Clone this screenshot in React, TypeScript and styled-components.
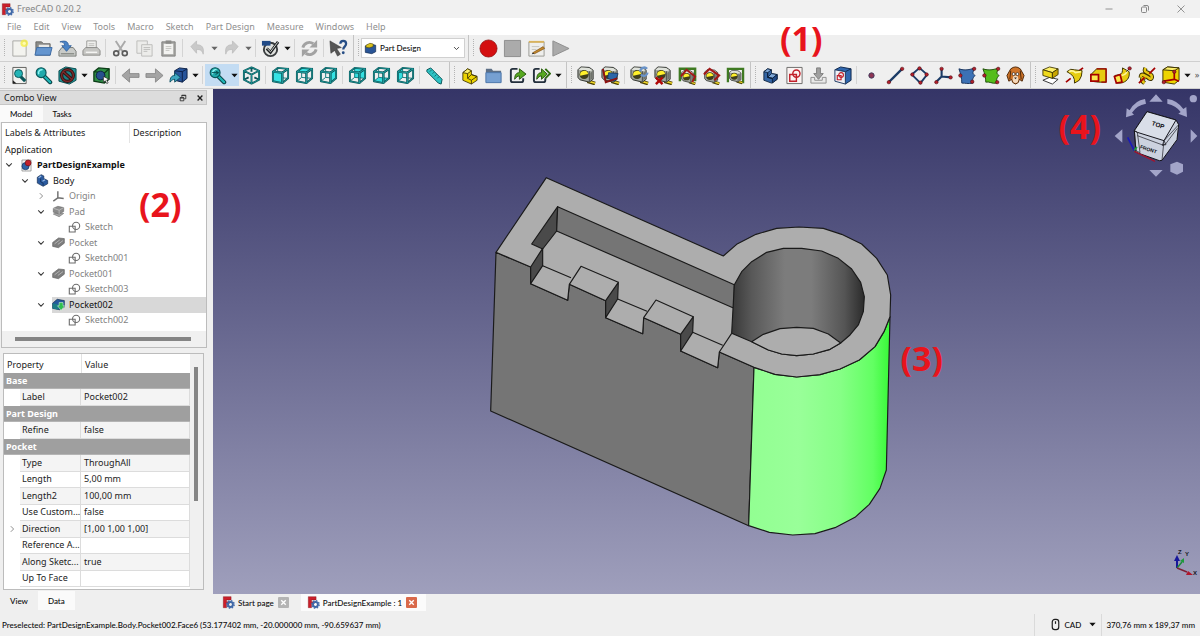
import React from "react";
import styled, { createGlobalStyle, css } from "styled-components";

const GlobalStyle = createGlobalStyle`
  *, *::before, *::after { box-sizing: border-box; }
  body {
    margin: 0;
    background: #efefef;
    color: #1c1c1c;
    font: 9px/12px "Noto Sans", "Open Sans", sans-serif;
  }
  button, select { font: inherit; color: inherit; border: 0; padding: 0; margin: 0; background: none; }
  ul { list-style: none; margin: 0; padding: 0; }
`;

const smallText = css`
  color: #0c0c0c;
  font-family: Lato, "Noto Sans", sans-serif;
  font-size: 8px;
  font-weight: 500;
`;

/* ---------- icons ---------- */

type Face = "front" | "top" | "right" | "back" | "bottom" | "left";

const FACES: Record<Face, string> = {
  front: "2,6 12,7 12,18 2,16",
  top: "2,6 7,2 18,3 12,7",
  right: "12,7 18,3 18,13 12,18",
  back: "7,2 18,3 18,13 7,12",
  bottom: "2,16 7,12 18,13 12,18",
  left: "2,6 7,2 7,12 2,16",
};

const CubeView = ({ face }: { face: Face }) => {
  const hidden = face === "back" || face === "bottom" || face === "left";
  return (
    <g strokeLinejoin="round" fill="none">
      {hidden && <polygon points={FACES[face]} fill="#35dfe0" />}
      <path d="M7 2V12M7 12L2 16M7 12L18 13" stroke="#127b7d" strokeWidth="1" />
      {!hidden && <polygon points={FACES[face]} fill="#35e3e4" />}
      <g stroke="#0a5558" strokeWidth="2">
        <polygon points={FACES.front} />
        <polygon points={FACES.top} />
        <polygon points={FACES.right} />
      </g>
      <g stroke="#26a5a6" strokeWidth=".7">
        <polygon points={FACES.front} />
        <polygon points={FACES.top} />
        <polygon points={FACES.right} />
      </g>
    </g>
  );
};

const Lens = () => (
  <g>
    <path d="M11 11l6 6" stroke="#083f42" strokeWidth="4.4" strokeLinecap="round" />
    <path d="M11 11l6 6" stroke="#1fb4b6" strokeWidth="2.4" strokeLinecap="round" />
    <circle cx="7.5" cy="7" r="5.2" fill="#20a9ab" stroke="#0a5558" strokeWidth="1.2" />
    <path d="M5 8.6A3.4 3.4 0 0 1 9 4" stroke="#8ff3f3" strokeWidth="1.6" fill="none" />
  </g>
);

const Tape = () => (
  <g strokeLinejoin="round">
    <path d="M11 16l8 2.500" stroke="#4b3f00" strokeWidth="3.800" />
    <path d="M11 15.600l8 2.500" stroke="#edd42a" strokeWidth="1.800" />
    <path d="M1 4l3-3 9 .5 4 3V14l-4 3-10-2.500-2-2.500z" fill="#a3a79f" stroke="#2c2f2b" strokeWidth="1" />
    <path d="M1.500 4l3-2.500 8 .5 4 2.500-3.500 1z" fill="#dfe2db" />
    <path d="M13 5.500v11" stroke="#2c2f2b" strokeWidth=".8" />
    <path d="M14 7v8l2-1.500V6z" fill="#6f736c" />
    <circle cx="7.500" cy="9" r="4.800" fill="#3f3e1c" />
    <path d="M3.400 10.200a4.200 4.200 0 0 1 8.300-1.700z" fill="#fff02c" />
  </g>
);

const BlueBody = () => (
  <g stroke="#0b1e3a" strokeWidth=".9" strokeLinejoin="round">
    <path d="M3 6l4-3 4 1v4l6 1v5l-6 4-8-3z" fill="#3465a4" />
    <path d="M3 6l4-3 4 1-4 3z" fill="#7fa8d8" />
    <path d="M7 12l4-4 6 1-5 4z" fill="#7fa8d8" />
    <path d="M7 7v5l5 1v5l5-4V9l-5 4-5-1z" fill="#204a87" />
  </g>
);

const Dot = ({ x, y }: { x: number; y: number }) => (
  <circle cx={x} cy={y} r="1.800" fill="#b3202c" stroke="#4d0a10" strokeWidth=".6" />
);

const FreecadLogo = () => (
  <g>
    <path d="M2 1h12v5H7v3h4v3H7v6H2z" fill="#cb1f2a" stroke="#7d0f16" strokeWidth=".6" />
    <circle cx="13" cy="13" r="3.800" fill="none" stroke="#3f68a8" strokeWidth="3" />
    <circle cx="13" cy="13" r="5.800" fill="none" stroke="#3f68a8" strokeWidth="2" strokeDasharray="2.300 2.250" />
  </g>
);

const YellowBox = () => (
  <g stroke="#3c3200" strokeWidth=".9" strokeLinejoin="round">
    <path d="M2 4l7-3 9 2-6 4z" fill="#fdf06a" />
    <path d="M2 4l10 3v6L2 10z" fill="#f0da1c" />
    <path d="M12 7l6-4v6l-6 4z" fill="#c9a600" />
  </g>
);

const ICONS: Record<string, React.ReactNode> = {
  logo: <FreecadLogo />,
  fileNew: (
    <g>
      <path d="M3 2h14v16H3z" fill="#f3f3ef" stroke="#a9a9a5" />
      <circle cx="15" cy="4.500" r="4" fill="#f5ee3c" opacity=".75" />
      <circle cx="15" cy="4.500" r="1.700" fill="#fffcb0" />
    </g>
  ),
  open: (
    <g>
      <path d="M2 17V3h6l2 2h7v12z" fill="#8b8b88" stroke="#6a6a68" />
      <path d="M5 6h11v6H5z" fill="#e8e8e6" />
      <path d="M1 17l2-8h16l-2 8z" fill="#6495cf" stroke="#3d6ba5" />
    </g>
  ),
  save: (
    <g>
      <path d="M1 13l3-4h12l3 4v5H1z" fill="#c9cbc8" stroke="#777a76" />
      <path d="M3 15.500h14" stroke="#8d908b" strokeWidth="1.500" />
      <path d="M2 3c6-2 9 0 9 4h3l-5 6-5-6h3c0-3-2-4-5-4z" fill="#4a83c6" stroke="#2a5a97" strokeWidth=".8" />
    </g>
  ),
  print: (
    <g>
      <path d="M5 2h10v9H5z" fill="#f1f1ef" stroke="#9b9b98" />
      <path d="M7 5h6M7 7h6" stroke="#b9b9b6" />
      <path d="M1 12l3-3h12l3 3v5H1z" fill="#c6c6c3" stroke="#8a8a87" />
      <path d="M4 14h12" stroke="#f5f5f3" strokeWidth="1.500" />
    </g>
  ),
  cut: (
    <g fill="none">
      <path d="M5 2l7 11M15 2L8 13" stroke="#a9a9a9" strokeWidth="2" />
      <circle cx="5.500" cy="15" r="2.600" stroke="#5c5c5c" strokeWidth="1.800" />
      <circle cx="14.500" cy="15" r="2.600" stroke="#5c5c5c" strokeWidth="1.800" />
    </g>
  ),
  copy: (
    <g fill="#ececea" stroke="#bdbdba">
      <path d="M2 2h11v13H2z" />
      <path d="M7 6h11v12H7z" />
      <path d="M9 9h7M9 11h7M9 13h4" />
    </g>
  ),
  paste: (
    <g>
      <path d="M3 3h14v15H3z" fill="#a6a6a3" stroke="#82827f" />
      <path d="M5 5h10v11H5z" fill="#f3f3f1" />
      <path d="M7 1.500h6V5H7z" fill="#8b8b88" />
      <path d="M7 8h6M7 10h6M7 12h4" stroke="#c4c4c1" />
    </g>
  ),
  undo: <path d="M3 8l6-6v4c6 0 8 3 7 10-1-4-3-5-7-5v4z" fill="#c9c9c9" stroke="#b8b8b8" strokeWidth=".7" />,
  redo: <path d="M17 8l-6-6v4c-6 0-8 3-7 10 1-4 3-5 7-5v4z" fill="#c9c9c9" stroke="#b8b8b8" strokeWidth=".7" />,
  validate: (
    <g fill="none">
      <circle cx="10" cy="11" r="7" stroke="#3a3d3f" strokeWidth="2" fill="#dfe1de" />
      <path d="M6 10l4 4 8-11" stroke="#202325" strokeWidth="3" />
      <path d="M6.500 10l3.500 3.500L17.500 3.500" stroke="#d7dad6" strokeWidth="1" />
      <path d="M1 2h9v5H1z" fill="#204a87" />
    </g>
  ),
  refresh: (
    <g fill="none" stroke="#a2a2a2" strokeWidth="3">
      <path d="M3 9a7 7 0 0 1 11-4" />
      <path d="M17 11a7 7 0 0 1-11 4" />
      <path d="M18 1v8h-8z" fill="#a2a2a2" stroke="none" />
      <path d="M2 19v-8h8z" fill="#a2a2a2" stroke="none" />
    </g>
  ),
  whats: (
    <g>
      <path d="M1 2l12 7-5 1 4 6-3 2-3-6-4 3z" fill="#565656" stroke="#333" strokeWidth=".6" />
      <path d="M12 5c0-4 6-4 6 0 0 3-3 3-3 6" fill="none" stroke="#274e86" strokeWidth="2.400" />
      <circle cx="15" cy="14.500" r="1.500" fill="#274e86" />
    </g>
  ),
  record: <circle cx="10" cy="10" r="9" fill="#d40f10" stroke="#8f0b0b" strokeWidth=".8" />,
  stop: <path d="M1.500 1.500h17v17h-17z" fill="#ababab" stroke="#8c8c8c" />,
  macro: (
    <g>
      <path d="M2 3h16v15H2z" fill="#eeeeec" stroke="#9a9a94" />
      <path d="M2 2h16v2H2z" fill="#d9b35c" />
      <path d="M5 8h8M5 11h5" stroke="#c4c4bd" />
      <path d="M6 14.500L17 8l1.500 2L8 15.500z" fill="#c48a2b" stroke="#7b4d13" strokeWidth=".7" />
      <path d="M5 16l1-1.500 2 1z" fill="#222" />
    </g>
  ),
  play: <path d="M2 2l17 8-17 8z" fill="#aaaaaa" stroke="#8c8c8c" />,

  fitAll: (
    <g>
      <path d="M3 1.500h14v17H3z" fill="#f2f2f0" stroke="#5c5c5a" />
      <path d="M3 15l4 3.500H3z" fill="#222" />
      <path d="M11 11l5 5" stroke="#0a5558" strokeWidth="3.400" />
      <circle cx="9" cy="8" r="4.200" fill="#24b4b6" stroke="#0a5558" strokeWidth="1" />
    </g>
  ),
  fitSel: <Lens />,
  drawStyle: (
    <g>
      <path d="M1 5l7-4 11 2v12l-7 4-11-3z" fill="#1f9599" stroke="#0a4a4d" />
      <circle cx="10" cy="10" r="6.200" fill="#1d7f83" stroke="#2d1414" strokeWidth="3.400" />
      <path d="M5.500 6l9 8" stroke="#2d1414" strokeWidth="3.400" />
      <circle cx="10" cy="10" r="6.200" fill="none" stroke="#7f2a2a" strokeWidth="1.400" />
      <path d="M5.500 6l9 8" stroke="#7f2a2a" strokeWidth="1.400" />
    </g>
  ),
  selBox: (
    <g>
      <path d="M2 6l5-4 11 1v11l-5 4-11-2z" fill="#2f8f46" stroke="#0c3d17" strokeWidth="1.400" />
      <path d="M2 6l11 1.500V18M13 7.500L18 3" fill="none" stroke="#0c3d17" strokeWidth="1.400" />
      <circle cx="9" cy="10" r="4.600" fill="#27508e" stroke="#0d2147" />
      <path d="M12 11l6 3-2.500.8 1.500 3-1.500.7-1.500-3-2 1.500z" fill="#fff" stroke="#222" strokeWidth=".7" />
    </g>
  ),
  back: <path d="M1 10l8-7v5h10v4H9v5z" fill="#a4a4a4" stroke="#7f7f7f" strokeWidth=".8" />,
  forward: <path d="M19 10l-8-7v5H1v4h10v5z" fill="#a4a4a4" stroke="#7f7f7f" strokeWidth=".8" />,
  linkGo: (
    <g>
      <path d="M6 5l5-3 8 1v10l-5 4-8-2z" fill="#27549a" stroke="#0d2147" />
      <path d="M6 5l8 1v11M14 6l5-3" fill="none" stroke="#0d2147" />
      <path d="M1 17c0-5 2-7 5-7V7l6 5-6 5v-3c-2 0-3 1-5 3z" fill="#3ea6c0" stroke="#0c4a5c" strokeWidth=".9" />
    </g>
  ),
  viewSync: (
    <g>
      <Lens />
      <path d="M4 7h7M8 5l3 2-3 2" fill="none" stroke="#04494b" />
    </g>
  ),
  isometric: (
    <g fill="none" strokeLinejoin="round">
      <path d="M10 1.500L18 5v9.500L10 18.500 2 14.500V5zM2 5l8 4 8-4M10 9v9.500M10 1.500V6M2 14.500L7 12M18 14.500L13 12" stroke="#0a5558" strokeWidth="2" />
      <path d="M10 1.500L18 5v9.500L10 18.500 2 14.500V5zM2 5l8 4 8-4M10 9v9.500" stroke="#26a5a6" strokeWidth=".7" />
    </g>
  ),
  front: <CubeView face="front" />,
  top: <CubeView face="top" />,
  right: <CubeView face="right" />,
  rear: <CubeView face="back" />,
  bottom: <CubeView face="bottom" />,
  left: <CubeView face="left" />,
  ruler: (
    <g>
      <path d="M2 4l4-2 12 12-1 5-3-1L2 6z" fill="#2dc2c4" stroke="#0a5558" strokeLinejoin="round" />
      <path d="M7 4l-2 2M9.500 6.500l-1.500 1.500M12 9l-2 2M14.500 11.500L13 13" stroke="#0a5558" strokeWidth=".8" />
    </g>
  ),
  part: (
    <g stroke="#3c3200" strokeWidth=".9" strokeLinejoin="round">
      <path d="M3 7l5-4 4 2v4l6 2v4l-6 4-9-4z" fill="#edd400" />
      <path d="M3 7l5-4 4 2-4 3z" fill="#fdf06a" />
      <path d="M8 8v5l4 2v4M8 13l4-4 6 2-6 4" fill="none" />
    </g>
  ),
  group: (
    <g>
      <path d="M2 17V3h6l1.500 2H18v12z" fill="#5d6f86" />
      <path d="M2 7h16v10.500H2z" fill="#76a0d2" stroke="#4d77ab" />
    </g>
  ),
  link: (
    <g fill="none">
      <path d="M10 3H5q-2 0-2 2v10q0 2 2 2h9q2 0 2-2v-2" stroke="#232f3c" strokeWidth="2" />
      <path d="M7 14c0-5 2-7 5-7V3l7 5.500-7 5.500v-3.500c-2 0-3 1-5 3.500z" fill="#57a821" stroke="#1e4d06" strokeWidth=".9" />
    </g>
  ),
  linkMulti: (
    <g fill="none">
      <path d="M8 3H4Q2 3 2 5v10q0 2 2 2h8q2 0 2-2v-2" stroke="#232f3c" strokeWidth="2" />
      <path d="M14 3l5 5-5 5" stroke="#2f6d0f" strokeWidth="2" />
      <path d="M5 14c0-5 2-7 5-7V3l6 5.500-6 5.500v-3.500c-2 0-3 1-5 3.500z" fill="#57a821" stroke="#1e4d06" strokeWidth=".9" />
    </g>
  ),
  measLinear: <Tape />,
  measAngular: (
    <g>
      <Tape />
      <path d="M8 7l10 1-3 8-8-3z" fill="#2b66a8" stroke="#14335c" strokeWidth=".8" />
      <path d="M2 3l3 14 12-4" fill="none" stroke="#8d1212" strokeWidth="2" />
    </g>
  ),
  measRefresh: (
    <g>
      <Tape />
      <path d="M11 6a4 4 0 0 1 7-3M18.500 7a4 4 0 0 1-7 2" fill="none" stroke="#6a93c8" strokeWidth="2.400" />
    </g>
  ),
  measClear: (
    <g>
      <Tape />
      <path d="M2 12l7 7M9 12l-7 7" stroke="#b00808" strokeWidth="2.600" />
    </g>
  ),
  measToggle: (
    <g>
      <path d="M2 16V3h16v13" fill="none" stroke="#3f7a22" strokeWidth="2.600" />
      <g transform="translate(3 4) scale(.8)">
        <Tape />
      </g>
      <path d="M3 11l6-7 9 7-3 6" fill="none" stroke="#a31818" strokeWidth="2" />
    </g>
  ),
  measToggle3d: (
    <g>
      <g transform="translate(2 3) scale(.85)">
        <Tape />
      </g>
      <path d="M2 9l6-6 10 7-5 5" fill="none" stroke="#a31818" strokeWidth="2.200" />
    </g>
  ),
  measDelta: (
    <g>
      <path d="M2 17V3h16v14h-4" fill="none" stroke="#3f7a22" strokeWidth="2.400" />
      <g transform="translate(3 4) scale(.75)">
        <Tape />
      </g>
    </g>
  ),
  body: <BlueBody />,
  sketch: (
    <g>
      <path d="M2 1.500h16v17H2z" fill="#fbf3f2" stroke="#6b6b69" />
      <path d="M5 9h7v7H5z" fill="none" stroke="#c2202a" strokeWidth="1.500" />
      <circle cx="12" cy="8" r="3.800" fill="none" stroke="#c2202a" strokeWidth="1.500" />
    </g>
  ),
  mapSketch: (
    <g>
      <path d="M2 12h4v3h8v-3h4v6H2z" fill="#e9e9e9" stroke="#8d8d8d" />
      <path d="M8 2h4v6h3l-5 6-5-6h3z" fill="#a0a0a0" stroke="#7c7c7c" />
    </g>
  ),
  sketchView: (
    <g>
      <path d="M2 4l6-3 11 2v12l-6 4V6z" fill="#2f66ae" stroke="#10284c" />
      <path d="M13 6l6-3" stroke="#10284c" />
      <path d="M2 4l11 2v13L2 16z" fill="#eef1f6" stroke="#203a63" />
      <circle cx="8.500" cy="9.500" r="2.500" fill="none" stroke="#c2202a" strokeWidth="1.200" />
      <path d="M4.500 10h4v4.500h-4z" fill="none" stroke="#c2202a" strokeWidth="1.200" />
    </g>
  ),
  point: <circle cx="10" cy="10" r="2.800" fill="#8d3453" stroke="#3f3a5c" />,
  line: (
    <g>
      <path d="M3 17L17 3" stroke="#1b3b66" strokeWidth="2.400" />
      <Dot x={3} y={17} />
      <Dot x={17} y={3} />
    </g>
  ),
  plane: (
    <g>
      <path d="M2 9l8-7 8 7-7 9z" fill="none" stroke="#1b3b66" strokeWidth="2" />
      <Dot x={2.5} y={9} />
      <Dot x={10} y={2.5} />
      <Dot x={17.5} y={9} />
      <Dot x={11} y={17.5} />
    </g>
  ),
  axes: (
    <g>
      <path d="M8 11V3M8 11l-6 6M8 11l10 1" stroke="#1b3b66" strokeWidth="2.200" />
      <Dot x={8} y={3} />
      <Dot x={2.5} y={17} />
      <Dot x={17.5} y={12} />
    </g>
  ),
  shapeBinder: (
    <g>
      <path d="M1 3c6 2 11 1 17-1-3 5-3 6 0 8-3 3-3 5-2 8-6 1-8 0-12 0 0-5-1-9-3-15z" fill="#3c71b5" stroke="#17335d" />
      <Dot x={17} y={3} />
      <Dot x={2.5} y={10} />
      <Dot x={15} y={16.5} />
    </g>
  ),
  subShape: (
    <g>
      <path d="M1 3c6 2 11 1 17-1-3 5-3 6 0 8-3 3-3 5-2 8-6 1-8-2-12-1 0-4-1-9-3-14z" fill="#55bd1c" stroke="#1d4d08" />
      <Dot x={17} y={3} />
      <Dot x={2.5} y={10} />
      <Dot x={16} y={17} />
    </g>
  ),
  clone: (
    <g>
      <path d="M5 3q5-4 10 0l4 7-2 6-3-2q0 4-4 5-4-1-4-5l-3 2-2-6z" fill="#cf7428" stroke="#4a2405" />
      <ellipse cx="10" cy="14" rx="3" ry="4" fill="#f3d9bd" />
      <path d="M5 5l-1 9M15 5l1 9" stroke="#4a2405" />
      <circle cx="8" cy="8.500" r="1.500" fill="#fff" stroke="#222" strokeWidth=".7" />
      <circle cx="12" cy="8.500" r="1.500" fill="#fff" stroke="#222" strokeWidth=".7" />
      <path d="M8.500 12h3l-1.500 2z" fill="#222" />
    </g>
  ),
  pad: (
    <g>
      <path d="M2 15l7-3 9 2-6 5z" fill="#fff" stroke="#333" />
      <YellowBox />
    </g>
  ),
  revolution: (
    <g>
      <path d="M1 17l5-4M15 5l4-3" stroke="#a40000" strokeWidth="1.800" />
      <path d="M2 6q4-4 8-2l8 1q0 6-3 10l-5 3q1-8-8-12z" fill="#e6cc10" stroke="#3c3200" />
      <path d="M4 6q4-2 7 1l6-1" fill="none" stroke="#fff59a" strokeWidth="1.800" />
    </g>
  ),
  loft: (
    <g>
      <path d="M2 9l6-6h10v14l-8 0-8-1z" fill="#e6cc10" stroke="#3c3200" />
      <path d="M2 9h8v7H2z" fill="#fbe94f" stroke="#a40000" strokeWidth="1.800" />
      <path d="M8 3h10v14h-5" fill="none" stroke="#a40000" strokeWidth="1.400" />
    </g>
  ),
  sweep: (
    <g>
      <path d="M2 10l5-1c3-1 3-3 3-7l7 4c1 7-3 11-9 12H4z" fill="#e6cc10" stroke="#3c3200" />
      <path d="M9 10q5-1 6-5" fill="none" stroke="#fff59a" strokeWidth="1.500" />
      <path d="M1.500 11l6-2 2 8-6 1z" fill="#fbe94f" stroke="#a40000" strokeWidth="1.800" />
      <path d="M14 6l4-4" stroke="#222" />
      <Dot x={17.5} y={2.5} />
    </g>
  ),
  helix: (
    <g>
      <path d="M4 12c0-6 6-1 9 1s4-3 0-5-6-2-4-6M8 18c-4-3-3-6 1-6" fill="none" stroke="#3c3200" strokeWidth="4.600" />
      <path d="M4 12c0-6 6-1 9 1s4-3 0-5-6-2-4-6M8 18c-4-3-3-6 1-6" fill="none" stroke="#e5c712" strokeWidth="2.600" />
      <path d="M2 18l6-6M13 8l6-6" stroke="#a40000" strokeWidth="1.800" />
    </g>
  ),
  box: (
    <g strokeLinejoin="round">
      <path d="M2 4l5-3 12 1v13l-5 4-12-2z" fill="#edd400" stroke="#3c3200" />
      <path d="M2 4l12 1 5-3-12-1z" fill="#fdf06a" stroke="#3c3200" />
      <path d="M14 5v9L3 16M14 14l5 2" fill="none" stroke="#a40000" strokeWidth="1.800" />
      <Dot x={3} y={17} />
      <Dot x={14} y={6} />
    </g>
  ),

  document: (
    <g>
      <path d="M3 1.500h14v17H3z" fill="#f5f5f3" stroke="#777" />
      <circle cx="8.500" cy="11" r="5.500" fill="#2f62a6" stroke="#122c54" />
      <circle cx="12.500" cy="6" r="4.500" fill="#c4202b" stroke="#6a0d13" />
    </g>
  ),
  treeBody: (
    <g strokeLinejoin="round">
      <path d="M2 5l6-4 4 2v4l6 3v5l-7 4-9-5z" fill="#2a5a9f" stroke="#10284c" />
      <path d="M4 6l4-3M10 11l4-2" stroke="#9bbbe4" strokeWidth="1.800" />
      <path d="M7 7v5l4 2v4" fill="none" stroke="#10284c" />
    </g>
  ),
  treeOrigin: <path d="M9 2v10l-7 5M9 12l9 1" stroke="#6f6f6f" fill="none" strokeWidth="2.200" />,
  treePad: (
    <g stroke="#5f5f5f" strokeWidth=".8">
      <path d="M2 14l7-3 9 2-7 5z" fill="#a8a8a8" />
      <path d="M2 5l7-3 9 2v6l-7 4-9-3z" fill="#8b8b8b" />
      <path d="M2 5l9 3 7-4M11 8v6" fill="none" stroke="#dedede" />
    </g>
  ),
  treePocket: (
    <g>
      <path d="M1 10l9-7 9 1v7l-9 7-9-2z" fill="#7d7d7d" stroke="#666" />
      <path d="M4 12l8-6M9 13l8-6" stroke="#c2c2c2" strokeWidth="1.200" />
    </g>
  ),
  treePocketTip: (
    <g>
      <path d="M1 8l7-6 11 2v10l-7 4-11-2z" fill="#265a9d" stroke="#10284c" />
      <path d="M1 8l9 2v8l-9-2z" fill="#1d7d86" />
      <path d="M11 7h6v5h2.500l-5.500 7-5.500-7H11z" fill="#2fbf4f" stroke="#eaffea" strokeWidth=".8" />
    </g>
  ),
  treeSketch: (
    <g fill="none" stroke="#6d6d6d" strokeWidth="1.700">
      <path d="M2 8h9v9H2z" />
      <circle cx="12.500" cy="7.500" r="5.500" />
    </g>
  ),
  workbench: (
    <g>
      <path d="M2 6l8-3 8 2v10l-6 3-10-2z" fill="#2a5597" stroke="#10284c" />
      <path d="M3 5l6-3 5 1v4l-6 2-5-1z" fill="#d9c11e" stroke="#4a4000" strokeWidth=".8" />
    </g>
  ),
  mouse: (
    <g fill="none" stroke="#1d1d1d" strokeWidth="1.800">
      <rect x="5" y="2" width="10" height="16" rx="4" />
      <path d="M10 5v4" />
    </g>
  ),
  minimize: <path d="M3 10h14" stroke="#7b7b7b" strokeWidth="1.600" />,
  restore: (
    <g fill="none" stroke="#7b7b7b" strokeWidth="1.800">
      <rect x="3" y="6" width="10" height="11" rx="2" />
      <path d="M7 3h7q3 0 3 3v7" />
    </g>
  ),
  close: <path d="M3 3l14 14M17 3L3 17" stroke="#7b7b7b" strokeWidth="1.600" />,
  dockFloat: <path d="M3 9h9v8H3zM3 10h9M7 7V3h10v9h-4M7 4h10" fill="none" stroke="#222" strokeWidth="2" />,
  dockClose: <path d="M4 4l12 12M16 4L4 16" stroke="#222" strokeWidth="3.400" />,
  tabClose: <path d="M5 5l10 10M15 5L5 15" stroke="#fff" strokeWidth="3" />,
  chevDown: <path d="M3 6l7 7 7-7" fill="none" stroke="#3a3a3a" strokeWidth="2.600" />,
  chevRight: <path d="M7 3l7 7-7 7" fill="none" stroke="#8a8a8a" strokeWidth="2.400" />,
  caret: <path d="M1 5h18l-9 10z" fill="#111" />,
  caretDim: <path d="M1 5h18l-9 10z" fill="#666" />,
};

const Svg = styled.svg`
  display: block;
  flex: none;
`;

const Icon = ({ name, size = 19 }: { name: string; size?: number }) => (
  <Svg width={size} height={size} viewBox="0 0 20 20" aria-hidden="true">
    {ICONS[name]}
  </Svg>
);

/* ---------- window frame ---------- */

const Window = styled.div`
  display: flex;
  flex-direction: column;
  min-height: 100vh;
`;

const TitleBar = styled.header`
  display: flex;
  align-items: center;
  gap: 3px;
  height: 18px;
  padding: 0 1px;
  background: #f1f1f1;
  color: #868686;
`;

const WindowButtons = styled.div`
  display: flex;
  margin-left: auto;
`;

const WindowButton = styled.button`
  display: flex;
  align-items: center;
  justify-content: center;
  width: 36px;
  height: 18px;
`;

const MenuBar = styled.nav`
  display: flex;
  gap: 12px;
  height: 17px;
  padding: 0 7px;
  background: #fff;
  color: #8f8f8f;
`;

const MenuItem = styled.button`
  white-space: nowrap;
`;

/* ---------- tool bars ---------- */

const ToolArea = styled.div`
  position: relative;
`;

const ToolRow = styled.div`
  display: flex;
  height: 27px;
  border-bottom: 1px solid #cfcfcf;
  background: #efefef;
`;

const ToolGroup = styled.div`
  display: flex;
  align-items: center;
  padding: 0 3px 0 7px;
  border-right: 1px solid #c4c4c4;
  background: repeating-linear-gradient(#b4b4b4 0 1px, #efefef 1px 2px) 4px 4px / 1px 18px no-repeat;

  &:last-child { border-right: 0; }
`;

const ToolButton = styled.button<{ $lit?: boolean }>`
  display: flex;
  align-items: center;
  justify-content: center;
  width: 24px;
  height: 22px;
  background: ${(p) => (p.$lit ? "#c3dcf3" : "none")};
`;

const MenuArrow = styled(ToolButton)`
  width: 10px;
`;

const Divider = styled.span`
  flex: none;
  width: 1px;
  height: 18px;
  margin: 0 2px;
  background: #d4d4d4;
`;

const WorkbenchBox = styled.label`
  display: flex;
  align-items: center;
  gap: 3px;
  width: 104px;
  height: 20px;
  padding: 0 4px 0 2px;
  border: 1px solid #d0d0d0;
  background: #fff;
  ${smallText}
`;

const WorkbenchSelect = styled.select`
  flex: 1;
  min-width: 0;
  appearance: none;
  outline: none;
`;

const Overflow = styled.button`
  width: 10px;
  color: #555;
`;

/* "|" is a divider; ":v" gives the button a menu arrow, ":d" a dimmed one, "*" marks it active */
const ToolItems = ({ items }: { items: string }) => (
  <>
    {items.split(" ").map((item, i) => {
      if (item === "|") return <Divider key={i} />;
      const [name, flags = ""] = item.split(":");
      const lit = flags.includes("*");
      return (
        <React.Fragment key={i}>
          <ToolButton $lit={lit} aria-label={name}>
            <Icon name={name} />
          </ToolButton>
          {/[vd]/.test(flags) && (
            <MenuArrow $lit={lit} aria-label={`${name} menu`}>
              <Icon name={flags.includes("d") ? "caretDim" : "caret"} size={7} />
            </MenuArrow>
          )}
        </React.Fragment>
      );
    })}
  </>
);

const Note = styled.span`
  position: absolute;
  z-index: 2;
  color: #e8141c;
  font: bold 34px/40px "Open Sans", "Noto Sans", sans-serif;
  pointer-events: none;
`;

const ToolNote = styled(Note)`
  left: 65%;
  top: -17px;
`;

const TreeNote = styled(Note)`
  left: 137px;
  top: 61px;
`;

const ModelNote = styled(Note)`
  left: calc(50% + 194px);
  top: 249px;
`;

const CubeNote = styled(Note)`
  right: 99px;
  top: 17px;
`;

/* ---------- combo view ---------- */

const Main = styled.main`
  display: flex;
  flex: 1;
`;

const Dock = styled.aside`
  display: flex;
  flex-direction: column;
  width: 207px;
  margin-right: 6px;
  padding-top: 1px;
`;

const DockTitle = styled.div`
  display: flex;
  align-items: center;
  gap: 9px;
  height: 15px;
  padding: 0 2px 0 4px;
  border: 1px solid #c6c6c6;
  border-left: 0;
  background: #dcdcdc;
`;

const DockName = styled.span`
  flex: 1;
`;

const TabRow = styled.div`
  display: flex;
  height: 17px;
  ${smallText}
`;

const Tab = styled.button<{ $active?: boolean }>`
  padding: 0 10px;
  background: ${(p) => (p.$active ? "#fafafa" : "none")};
`;

const Panel = styled.section`
  position: relative;
  margin-left: 1px;
  border: 1px solid #bcbcbc;
  background: #fff;
`;

const TreeHead = styled.div`
  display: grid;
  grid-template-columns: 127px 1fr;
  height: 19px;
  line-height: 20px;
`;

const HeadCell = styled.span`
  padding-left: 3px;

  & + & { border-left: 1px solid #e4e4e4; }
`;

const Tree = styled.ul`
  display: grid;
  grid-auto-rows: 1fr;
  min-height: 186px;
`;

const TreeRow = styled.li<{ $depth: number; $dim?: boolean; $bold?: boolean }>`
  display: flex;
  align-items: center;
  padding-left: ${(p) => p.$depth * 16 - 13}px;
  color: ${(p) => (p.$dim ? "#828282" : "#111")};
  font-weight: ${(p) => (p.$bold ? 700 : 400)};
`;

const Twisty = styled.button`
  display: flex;
  align-items: center;
  width: 15px;
  height: 14px;
`;

const TreeLabel = styled.span<{ $selected?: boolean }>`
  display: flex;
  flex: 1;
  align-self: stretch;
  align-items: center;
  gap: 4px;
  background: ${(p) => (p.$selected ? "#d8d8d8" : "none")};
`;

const HScroll = styled.div`
  height: 16px;
  margin-top: 3px;
  padding: 6px 15px 0 13px;
  background: #f0f0f0;

  &::before {
    content: "";
    display: block;
    height: 4px;
    background: #858585;
  }
`;

const PropertyPanel = styled(Panel)`
  display: flex;
  flex: 1;
  margin: 5px 3px 0 3px;
  overflow: hidden;
`;

const PropertyTable = styled.table`
  display: block;
  flex: 1;
  min-width: 0;
`;

const PropertyHead = styled.thead`
  display: block;

  & > tr { height: 19px; }
`;

const PropertyBody = styled.tbody`
  display: grid;
  grid-auto-rows: 1fr;
  min-height: 214px;
`;

const PropertyRow = styled.tr`
  display: grid;
  grid-template-columns: 16px 61px 1fr;
  align-items: stretch;
`;

const Cell = styled.td<{ $shade?: boolean }>`
  display: flex;
  align-items: center;
  padding: 0 0 0 3px;
  border: solid #dcdcdc;
  border-width: 0 1px 1px 0;
  background: ${(p) => (p.$shade ? "#f4f4f4" : "#fff")};
  white-space: nowrap;
`;

const NameCell = styled(Cell)`
  padding-left: 2px;
`;

const GutterCell = styled.td`
  display: flex;
  align-items: center;
  justify-content: center;
  padding: 0;
`;

const HeadTh = styled.th`
  padding: 0 0 0 3px;
  font-weight: 400;
  text-align: left;
  line-height: 21px;

  &:first-child { grid-column: span 2; }
  & + & { border-left: 1px solid #e2e2e2; }
`;

const GroupTh = styled.th`
  display: flex;
  grid-column: 1 / -1;
  align-items: center;
  padding: 0 0 0 2px;
  border-bottom: 1px solid #b4b4b4;
  background: #9f9f9f;
  color: #fff;
`;

const VScroll = styled.div`
  width: 13px;
  padding: 13px 4px 0 4px;
  background: #f0f0f0;

  &::before {
    content: "";
    display: block;
    width: 4px;
    height: 134px;
    background: #858585;
  }
`;

const BottomTabs = styled(TabRow)`
  height: 19px;
  margin: 1px 3px 1px 0;
`;

/* ---------- 3D view ---------- */

const ViewArea = styled.section`
  display: flex;
  flex: 1;
  flex-direction: column;
  min-width: 0;
`;

const Viewport = styled.div`
  position: relative;
  flex: 1;
  min-height: 420px;
  overflow: hidden;
  background: linear-gradient(#353567, #9f9fbc);
`;

const ModelSvg = styled.svg`
  position: absolute;
  inset: 0;
  width: 100%;
  height: 100%;
`;

const CubeSvg = styled.svg`
  position: absolute;
  top: 0;
  right: 0;
`;

const AxisSvg = styled.svg`
  position: absolute;
  right: 0;
  bottom: 10px;
`;

const OUTER_FRONT = "822,607 885,628 950,636 1020,629 1080,612 1138,585 1185,545 1212,500 1230,455";
const HOLE_FRONT = "1082,534 1050,553 1000,567 950,572 905,567 865,555 815,530";

const Model = () => (
  <ModelSvg viewBox="0 0 987 505" role="img" aria-label="Part with highlighted cylindrical face">
    <defs>
      <linearGradient id="green" x1="0" x2="1">
        <stop offset="0" stopColor="#92ff92" />
        <stop offset=".35" stopColor="#99ff99" />
        <stop offset=".65" stopColor="#86ff86" />
        <stop offset=".88" stopColor="#62ff62" />
        <stop offset="1" stopColor="#38f838" />
      </linearGradient>
      <linearGradient id="bore" x1="0" x2="1">
        <stop offset="0" stopColor="#383838" />
        <stop offset=".15" stopColor="#585858" />
        <stop offset=".4" stopColor="#7c7c7c" />
        <stop offset=".6" stopColor="#7c7c7c" />
        <stop offset=".85" stopColor="#555" />
        <stop offset="1" stopColor="#2b2b2b" />
      </linearGradient>
    </defs>
    <g transform="translate(267 76) scale(.33333)" stroke="#1a1a1a" strokeWidth="3.500" strokeLinejoin="round">
      <polygon
        fill="#757575"
        points="48,262 152,306 152,356 263,406 268,358 377,407 377,458 488,506 491,458 602,508 602,558 713,608 718,561 822,607 806,1082 32,738"
      />
      <polygon
        fill="url(#green)"
        points={`${OUTER_FRONT} 1219,915 1200,970 1168,1018 1125,1057 1065,1088 1005,1106 938,1110 868,1102 806,1082`}
      />
      <polygon
        fill="#adadad"
        points={`48,262 199,38 730,273 770,238 828,208 890,190 957,186 1030,190 1085,208 1145,237 1190,280 1222,330 1232,390 1230,455 1212,500 1185,545 1138,585 1080,612 1020,629 950,636 885,628 822,607 718,561 713,608 602,558 602,508 491,458 488,506 377,458 377,407 268,358 263,406 152,356 152,306`}
      />
      <polygon fill="#4a4a4a" points="155,237 233,125 230,198 188,252" />
      <polygon fill="#757575" points="233,125 763,359 762,430 230,198" />
      <polygon fill="#4a4a4a" points="188,250 188,302 152,356 152,306" />
      <polygon fill="#4a4a4a" points="415,352 413,402 377,458 377,407" />
      <polygon fill="#4a4a4a" points="640,455 638,502 602,558 602,508" />
      <path
        fill="none"
        d="M188 302L273 338M268 358L303 304L415 352M413 402L501 439M491 458L528 405L640 455M638 502L728 541M718 561L755 505"
      />
      <polygon
        fill="url(#bore)"
        points={`763,359 785,320 815,290 860,262 910,250 965,250 1025,258 1075,280 1115,312 1142,352 1153,395 1150,440 1135,480 1110,510 ${HOLE_FRONT} 755,505`}
      />
      <polygon fill="#adadad" points={`815,530 850,508 900,491 950,487 1000,490 1045,507 ${HOLE_FRONT}`} />
    </g>
  </ModelSvg>
);

const NavigationCube = () => (
  <CubeSvg width="90" height="95" viewBox="180 0 270 285" role="img" aria-label="Navigation cube">
    <g fill="#a3a5c9">
      <path d="M318 16l20 22h-40zM318 263l20-20h-40zM194 141l23-20v40zM442 141l-20-20v40z" />
      <path d="M285 30q-30 4-46 34l-9-6-2 27 24-8-6-6q14-22 42-27z" />
      <path d="M352 30q30 4 48 30l9-6 2 30-26-10 7-5q-14-20-40-25z" />
      <circle cx="430" cy="29" r="11" />
      <path d="M361 226l20-8 18 8v22l-18 9-20-9z" />
    </g>
    <g stroke="#15151c" strokeWidth="3" strokeLinejoin="round" fill="#ccd2df">
      <path d="M291 68l87 25 8 14-5 45-45 62-8 1-70-25-5-65z" />
      <path d="M253 125l38-57 87 25-36 62-80-25z" fill="#d9dee8" />
      <path d="M262 130l-9-5 5 60 12 6zM342 155l44-48M336 213l6-58M342 155l-5 14 11-2zM262 140l76 28M336 168l10-2 36-48" fill="none" strokeWidth="2" />
    </g>
    <g fontFamily="Liberation Sans" fontWeight="700" fill="#0c0c10">
      <text x="304" y="108" transform="rotate(18 304 108)" fontSize="19">TOP</text>
      <text x="269" y="178" transform="rotate(18 269 178)" fontSize="15">FRONT</text>
    </g>
    <path d="M233 145l20 40" stroke="#1a1ab8" strokeWidth="5" />
    <path d="M253 187l62 30" stroke="#a3142e" strokeWidth="4" />
    <path d="M253 184l8-10" stroke="#1da33a" strokeWidth="5" />
  </CubeSvg>
);

const AxisCross = () => (
  <AxisSvg width="28" height="38" viewBox="0 0 28 38" role="img" aria-label="Axis cross">
    <path d="M5 22V13" stroke="#17179a" strokeWidth="2" />
    <path d="M5 9l3 6H2z" fill="#17179a" />
    <path d="M5 22l5-6" stroke="#1e8a3c" strokeWidth="1.500" />
    <path d="M12 12l0 5-4-2z" fill="#1e9a3c" />
    <path d="M5 22l10 4" stroke="#7c1f35" strokeWidth="1.500" />
    <path d="M21 29l-7 0 2-4z" fill="#b0172c" />
    <g fontFamily="Liberation Sans" fontWeight="700" fontSize="6" fill="#15151c">
      <text x="6" y="8">Z</text>
      <text x="13" y="10">Y</text>
      <text x="21" y="29">X</text>
    </g>
  </AxisSvg>
);

const DocumentTabs = styled.div`
  display: flex;
  gap: 3px;
  height: 17px;
  padding-left: 3px;
  ${smallText}
`;

const DocumentTab = styled.div<{ $active?: boolean }>`
  display: flex;
  align-items: center;
  gap: 2px;
  padding: 0 9px 0 6px;
  background: ${(p) => (p.$active ? "#fbfbfb" : "none")};
`;

const DocumentName = styled.button`
  display: flex;
  align-items: center;
  gap: 3px;
`;

const CloseTab = styled.button<{ $active?: boolean }>`
  display: flex;
  align-items: center;
  justify-content: center;
  width: 11px;
  height: 11px;
  margin-left: 2px;
  border-radius: 1px;
  background: ${(p) => (p.$active ? "#d9694a" : "#b4b4b4")};
`;

/* ---------- status bar ---------- */

const StatusBar = styled.footer`
  display: flex;
  align-items: center;
  height: 25px;
  padding: 2px 5px 0 2px;
  ${smallText}
`;

const StatusText = styled.span`
  flex: 1;
`;

const NavStyle = styled.button`
  display: flex;
  align-items: center;
  gap: 3px;
  height: 22px;
  padding: 0 5px 0 14px;
  border: solid #dadada;
  border-width: 0 1px;
`;

const NavCaret = styled.span`
  padding-left: 5px;
`;

const Dimensions = styled.span`
  padding-left: 4px;
`;

/* ---------- data ---------- */

const MENUS = ["File", "Edit", "View", "Tools", "Macro", "Sketch", "Part Design", "Measure", "Windows", "Help"];

interface Node {
  label: string;
  depth: number;
  icon: string;
  open?: boolean;
  closed?: boolean;
  dim?: boolean;
  bold?: boolean;
  selected?: boolean;
}

const NODES: Node[] = [
  { label: "PartDesignExample", depth: 1, icon: "document", open: true, bold: true },
  { label: "Body", depth: 2, icon: "treeBody", open: true },
  { label: "Origin", depth: 3, icon: "treeOrigin", closed: true, dim: true },
  { label: "Pad", depth: 3, icon: "treePad", open: true, dim: true },
  { label: "Sketch", depth: 4, icon: "treeSketch", dim: true },
  { label: "Pocket", depth: 3, icon: "treePocket", open: true, dim: true },
  { label: "Sketch001", depth: 4, icon: "treeSketch", dim: true },
  { label: "Pocket001", depth: 3, icon: "treePocket", open: true, dim: true },
  { label: "Sketch003", depth: 4, icon: "treeSketch", dim: true },
  { label: "Pocket002", depth: 3, icon: "treePocketTip", open: true, selected: true },
  { label: "Sketch002", depth: 4, icon: "treeSketch", dim: true },
];

type Prop = { group: string } | { name: string; value: string; shade?: boolean; expandable?: boolean };

const PROPS: Prop[] = [
  { group: "Base" },
  { name: "Label", value: "Pocket002", shade: true },
  { group: "Part Design" },
  { name: "Refine", value: "false", shade: true },
  { group: "Pocket" },
  { name: "Type", value: "ThroughAll", shade: true },
  { name: "Length", value: "5,00 mm" },
  { name: "Length2", value: "100,00 mm", shade: true },
  { name: "Use Custom...", value: "false" },
  { name: "Direction", value: "[1,00 1,00 1,00]", shade: true, expandable: true },
  { name: "Reference A...", value: "" },
  { name: "Along Sketc...", value: "true", shade: true },
  { name: "Up To Face", value: "" },
];

export default function App() {
  return (
    <Window>
      <GlobalStyle />
      <TitleBar>
        <Icon name="logo" size={13} />
        <span>FreeCAD 0.20.2</span>
        <WindowButtons>
          <WindowButton aria-label="Minimize"><Icon name="minimize" size={10} /></WindowButton>
          <WindowButton aria-label="Restore"><Icon name="restore" size={10} /></WindowButton>
          <WindowButton aria-label="Close"><Icon name="close" size={10} /></WindowButton>
        </WindowButtons>
      </TitleBar>
      <MenuBar>
        {MENUS.map((m) => (
          <MenuItem key={m}>{m}</MenuItem>
        ))}
      </MenuBar>

      <ToolArea>
        <ToolRow>
          <ToolGroup>
            <ToolItems items="fileNew open save print | cut copy paste | undo:d redo:d | validate:v | refresh | whats" />
          </ToolGroup>
          <ToolGroup>
            <WorkbenchBox>
              <Icon name="workbench" size={13} />
              <WorkbenchSelect aria-label="Workbench" defaultValue="Part Design">
                <option>Part Design</option>
              </WorkbenchSelect>
              <Icon name="chevDown" size={7} />
            </WorkbenchBox>
          </ToolGroup>
          <ToolGroup>
            <ToolItems items="record stop macro play" />
          </ToolGroup>
        </ToolRow>
        <ToolRow>
          <ToolGroup>
            <ToolItems items="fitAll fitSel drawStyle:v selBox | back forward linkGo:v | viewSync:v* isometric | front top right | rear bottom left | ruler" />
          </ToolGroup>
          <ToolGroup>
            <ToolItems items="part group link linkMulti:v" />
          </ToolGroup>
          <ToolGroup>
            <ToolItems items="measLinear measAngular | measRefresh measClear measToggle measToggle3d measDelta" />
          </ToolGroup>
          <ToolGroup>
            <ToolItems items="body sketch mapSketch sketchView | point line plane axes shapeBinder subShape clone" />
          </ToolGroup>
          <ToolGroup>
            <ToolItems items="pad revolution loft sweep helix box:v" />
            <Overflow aria-label="More tools">»</Overflow>
          </ToolGroup>
        </ToolRow>
        <ToolNote>(1)</ToolNote>
      </ToolArea>

      <Main>
        <Dock>
          <DockTitle>
            <DockName>Combo View</DockName>
            <button aria-label="Float panel"><Icon name="dockFloat" size={8} /></button>
            <button aria-label="Close panel"><Icon name="dockClose" size={8} /></button>
          </DockTitle>
          <TabRow>
            <Tab $active>Model</Tab>
            <Tab>Tasks</Tab>
          </TabRow>
          <Panel>
            <TreeHead>
              <HeadCell>Labels &amp; Attributes</HeadCell>
              <HeadCell>Description</HeadCell>
            </TreeHead>
            <Tree>
              <TreeRow $depth={1}>Application</TreeRow>
              {NODES.map((n) => (
                <TreeRow key={n.label} $depth={n.depth} $dim={n.dim} $bold={n.bold}>
                  {n.open || n.closed ? (
                    <Twisty aria-label={`Toggle ${n.label}`}>
                      <Icon name={n.closed ? "chevRight" : "chevDown"} size={8} />
                    </Twisty>
                  ) : (
                    <Twisty as="span" />
                  )}
                  <TreeLabel $selected={n.selected}>
                    <Icon name={n.icon} size={13} />
                    {n.label}
                  </TreeLabel>
                </TreeRow>
              ))}
            </Tree>
            <HScroll />
            <TreeNote>(2)</TreeNote>
          </Panel>
          <PropertyPanel>
            <PropertyTable>
              <PropertyHead>
                <PropertyRow>
                  <HeadTh>Property</HeadTh>
                  <HeadTh>Value</HeadTh>
                </PropertyRow>
              </PropertyHead>
              <PropertyBody>
                {PROPS.map((p) =>
                  "group" in p ? (
                    <PropertyRow key={p.group}>
                      <GroupTh>{p.group}</GroupTh>
                    </PropertyRow>
                  ) : (
                    <PropertyRow key={p.name}>
                      <GutterCell>{p.expandable && <Icon name="chevRight" size={8} />}</GutterCell>
                      <NameCell $shade={p.shade}>{p.name}</NameCell>
                      <Cell $shade={p.shade}>{p.value}</Cell>
                    </PropertyRow>
                  )
                )}
              </PropertyBody>
            </PropertyTable>
            <VScroll />
          </PropertyPanel>
          <BottomTabs>
            <Tab>View</Tab>
            <Tab $active>Data</Tab>
          </BottomTabs>
        </Dock>

        <ViewArea>
          <Viewport>
            <Model />
            <NavigationCube />
            <AxisCross />
            <ModelNote>(3)</ModelNote>
            <CubeNote>(4)</CubeNote>
          </Viewport>
          <DocumentTabs>
            <DocumentTab>
              <DocumentName><Icon name="logo" size={13} />Start page</DocumentName>
              <CloseTab aria-label="Close Start page"><Icon name="tabClose" size={9} /></CloseTab>
            </DocumentTab>
            <DocumentTab $active>
              <DocumentName><Icon name="logo" size={13} />PartDesignExample : 1</DocumentName>
              <CloseTab $active aria-label="Close PartDesignExample"><Icon name="tabClose" size={9} /></CloseTab>
            </DocumentTab>
          </DocumentTabs>
        </ViewArea>
      </Main>

      <StatusBar>
        <StatusText>
          Preselected: PartDesignExample.Body.Pocket002.Face6 (53.177402 mm, -20.000000 mm, -90.659637 mm)
        </StatusText>
        <NavStyle>
          <Icon name="mouse" size={13} />
          CAD
          <NavCaret><Icon name="caret" size={7} /></NavCaret>
        </NavStyle>
        <Dimensions>370,76 mm x 189,37 mm</Dimensions>
      </StatusBar>
    </Window>
  );
}
